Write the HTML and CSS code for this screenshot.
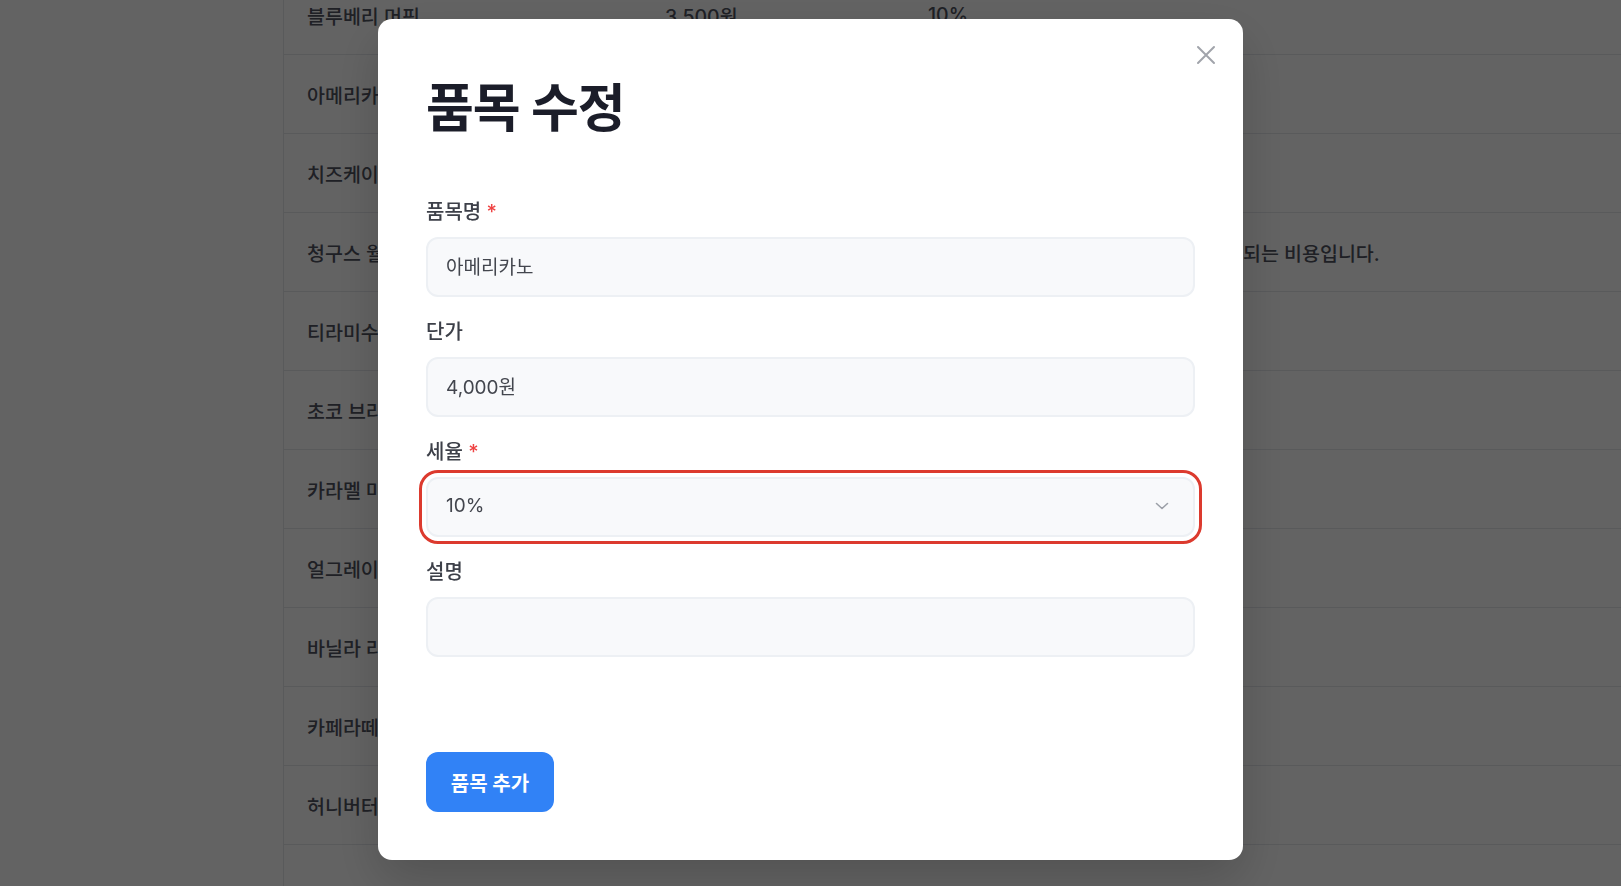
FILE: index.html
```html
<!DOCTYPE html>
<html lang="ko">
<head>
<meta charset="utf-8">
<title>품목 수정</title>
<link rel="stylesheet" href="styles.css">
</head>
<body>
<div class="page">
  <div class="table">
    <div class="row"><span>블루베리 머핀</span><span>3,500원</span><span>10%</span><span></span></div>
    <div class="row"><span>아메리카노</span><span>4,000원</span><span>10%</span><span></span></div>
    <div class="row"><span>치즈케이크</span><span>5,500원</span><span>10%</span><span></span></div>
    <div class="row"><span>청구스 월간 구독</span><span>9,900원</span><span>10%</span><span>월 구독료로 청구되는 비용입니다.</span></div>
    <div class="row"><span>티라미수</span><span>6,000원</span><span>10%</span><span></span></div>
    <div class="row"><span>초코 브라우니</span><span>4,500원</span><span>10%</span><span></span></div>
    <div class="row"><span>카라멜 마끼아또</span><span>5,000원</span><span>10%</span><span></span></div>
    <div class="row"><span>얼그레이 티</span><span>4,500원</span><span>10%</span><span></span></div>
    <div class="row"><span>바닐라 라떼</span><span>5,000원</span><span>10%</span><span></span></div>
    <div class="row"><span>카페라떼</span><span>4,500원</span><span>10%</span><span></span></div>
    <div class="row"><span>허니버터 브레드</span><span>6,500원</span><span>10%</span><span></span></div>
  </div>
</div>

<div class="overlay">
  <div class="modal">
    <button class="close" type="button" aria-label="닫기">
      <svg width="20" height="20" viewBox="0 0 20 20" fill="none" stroke="currentColor" stroke-width="2" stroke-linecap="round">
        <path d="M2 2L18 18M18 2L2 18"/>
      </svg>
    </button>
    <h2 class="title">품목 수정</h2>
    <form class="form">
      <div class="field">
        <label class="label">품목명 <span class="req">*</span></label>
        <input class="control" type="text" value="아메리카노">
      </div>
      <div class="field">
        <label class="label">단가</label>
        <input class="control" type="text" value="4,000원">
      </div>
      <div class="field">
        <label class="label">세율 <span class="req">*</span></label>
        <div class="control select">
          <span>10%</span>
          <svg class="chev" width="14" height="8" viewBox="0 0 14 8" fill="none" stroke="currentColor" stroke-width="1.6" stroke-linecap="round" stroke-linejoin="round">
            <path d="M1.5 1.5L7 6.5L12.5 1.5"/>
          </svg>
        </div>
      </div>
      <div class="field">
        <label class="label">설명</label>
        <input class="control" type="text" value="">
      </div>
    </form>
    <button class="submit" type="button">품목 추가</button>
  </div>
</div>
</body>
</html>
```

FILE: styles.css
```css
html, body {
  margin: 0;
  padding: 0;
  height: 100%;
  overflow: hidden;
  background: #ffffff;
  font-family: Inter, "Noto Sans CJK KR", "Noto Sans", sans-serif;
}

.page {
  height: 100vh;
  padding-left: 283px;
  box-sizing: border-box;
  overflow: hidden;
}

.table {
  margin-top: -24px;
  min-height: calc(100vh + 24px);
  border-left: 1px solid #e5e7eb;
}

.row {
  display: grid;
  grid-template-columns: 358px 263px 179px 1fr;
  align-items: center;
  height: 79px;
  box-sizing: border-box;
  padding-left: 23px;
  border-bottom: 1px solid #e5e7eb;
  font-size: 19.5px;
  font-weight: 500;
  color: #50535f;
  white-space: nowrap;
}

.overlay {
  position: fixed;
  inset: 0;
  background: rgba(0, 0, 0, 0.61);
  display: flex;
  justify-content: center;
  align-items: flex-start;
  padding-top: 19px;
  box-sizing: border-box;
}

.modal {
  position: relative;
  width: 865px;
  height: 841px;
  box-sizing: border-box;
  padding: 48px;
  background: #ffffff;
  border-radius: 14px;
  box-shadow: 0 20px 50px rgba(0, 0, 0, 0.18);
  display: flex;
  flex-direction: column;
}

.close {
  position: absolute;
  top: 19px;
  right: 20px;
  width: 34px;
  height: 34px;
  padding: 0;
  border: none;
  background: transparent;
  color: #a1a4ab;
  display: flex;
  align-items: center;
  justify-content: center;
  cursor: pointer;
}

.title {
  margin: 13px 0 60px;
  font-size: 52px;
  line-height: 58px;
  font-weight: 700;
  color: #1b1d29;
  letter-spacing: -1px;
}

.form {
  display: flex;
  flex-direction: column;
  gap: 21px;
}

.field {
  display: flex;
  flex-direction: column;
}

.label {
  font-size: 20px;
  line-height: 28px;
  margin-bottom: 11px;
  font-weight: 500;
  color: #3d4049;
}

.req {
  color: #ef4444;
}

.control {
  height: 60px;
  width: 100%;
  box-sizing: border-box;
  border: 2px solid #edf0f4;
  border-radius: 12px;
  background: #f8f9fb;
  padding: 0 18px 3px;
  font-family: Inter, "Noto Sans CJK KR", sans-serif;
  font-size: 19px;
  color: #43464e;
  outline: none;
}

.select {
  display: flex;
  align-items: center;
  justify-content: space-between;
  padding-right: 24px;
  outline: 3px solid #dc3a2e;
  outline-offset: 4px;
}

.chev {
  color: #9ca0a8;
}

.submit {
  margin-top: 95px;
  align-self: flex-start;
  width: 128px;
  height: 60px;
  border: none;
  border-radius: 12px;
  background: #3182f6;
  color: #ffffff;
  font-family: Inter, "Noto Sans CJK KR", sans-serif;
  font-size: 20px;
  font-weight: 700;
  cursor: pointer;
}
```
